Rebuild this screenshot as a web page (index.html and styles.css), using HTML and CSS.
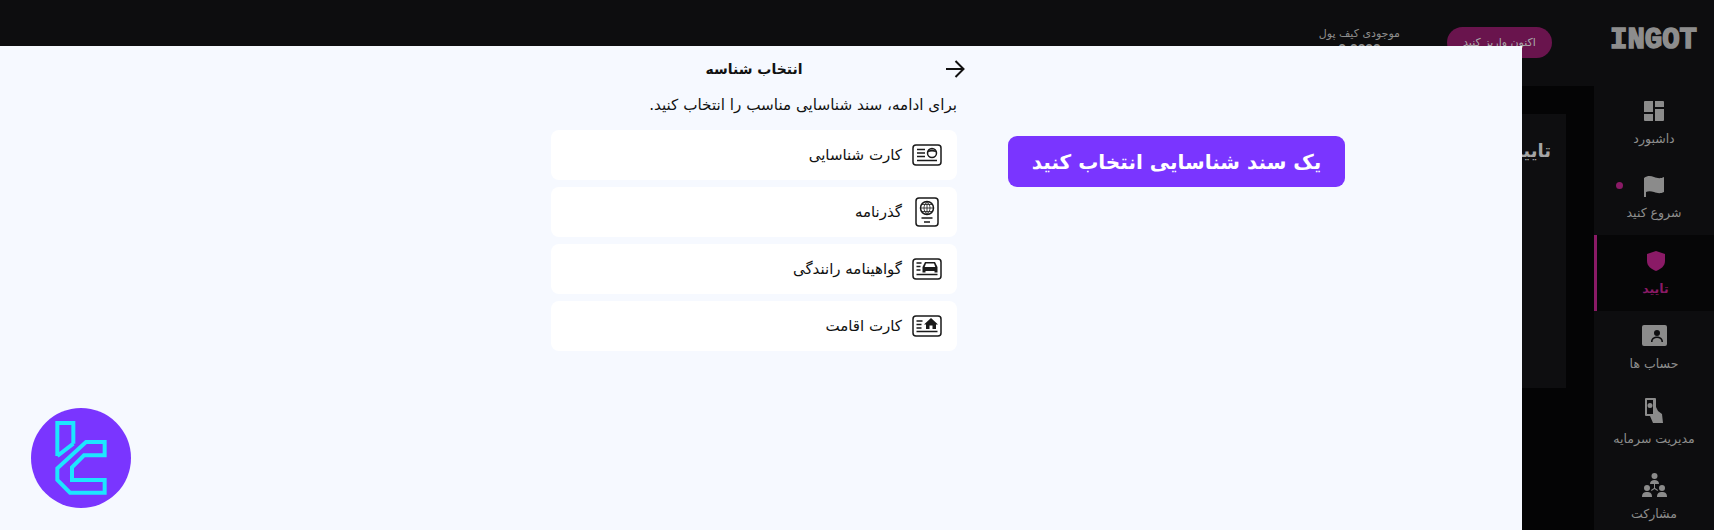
FILE: index.html
```html
<!DOCTYPE html>
<html lang="fa" dir="rtl">

<head>
    <meta charset="UTF-8">
    <meta name="viewport" content="width=device-width, initial-scale=1.0">
    <title>انتخاب شناسه</title>
    <link rel="stylesheet" href="styles.css">
</head>

<body>
    <!-- Dark dashboard behind the panel -->
    <header class="topbar">
        <div class="brand" dir="ltr">INGOT</div>
        <button class="deposit-button">اکنون واریز کنید</button>
        <div class="wallet">
            <span class="wallet-label">موجودی کیف پول</span>
            <span class="wallet-value" dir="ltr">0.0000</span>
        </div>
    </header>

    <div class="shell">
        <nav class="sidebar">
            <a class="nav-item">
                <svg class="nav-icon" viewBox="0 0 20 20"><path d="M0 1a1 1 0 0 1 1-1h8v11H0zM11 0h8a1 1 0 0 1 1 1v5h-9zM0 13h9v7H1a1 1 0 0 1-1-1zM11 8h9v11a1 1 0 0 1-1 1h-8z"/></svg>
                <span>داشبورد</span>
            </a>
            <a class="nav-item">
                <i class="nav-dot"></i>
                <svg class="nav-icon nav-icon-wide" viewBox="0 0 22 22"><path d="M1 3c4-3 7-2 10-1s6 2 10 0v15c-4 2-7 1-10 0s-6-1-8 0v5H1z"/></svg>
                <span>شروع کنید</span>
            </a>
            <a class="nav-item nav-item-active">
                <svg class="nav-icon" viewBox="0 0 20 20"><path d="M10 0l9 3v7c0 5-4 8-9 10-5-2-9-5-9-10V3z"/></svg>
                <span>تایید</span>
            </a>
            <a class="nav-item">
                <svg class="nav-icon nav-icon-account" viewBox="0 0 25 21"><path fill-rule="evenodd" d="M2 0h21a2 2 0 0 1 2 2v17a2 2 0 0 1-2 2H2a2 2 0 0 1-2-2V2a2 2 0 0 1 2-2zm13 5a3 3 0 1 0 0 6 3 3 0 0 0 0-6zm-6 12h1.500c0-3 2-4 4.500-4s4.500 1 4.500 4H21c0-4-3-5.500-6-5.500S9 13 9 17z"/></svg>
                <span>حساب ها</span>
            </a>
            <a class="nav-item">
                <svg class="nav-icon nav-icon-funds" viewBox="0 0 18 25"><path fill-rule="evenodd" d="M1 0h9a1 1 0 0 1 1 1v8l2 4 4 3 1 9H8l-3-7H1a1 1 0 0 1-1-1V1a1 1 0 0 1 1-1zm1 2v14h6V2zm3 3a2.500 2.500 0 1 1 0 5 2.500 2.500 0 0 1 0-5z"/></svg>
                <span>مدیریت سرمایه</span>
            </a>
            <a class="nav-item">
                <svg class="nav-icon nav-icon-share" viewBox="0 0 25 24"><circle cx="12.500" cy="3" r="3"/><path d="M8 11c0-3 2-4 4.500-4s4.500 1 4.500 4z"/><circle cx="5" cy="15" r="3"/><path d="M0 24c0-4 2-5 5-5s5 1 5 5z"/><circle cx="20" cy="15" r="3"/><path d="M15 24c0-4 2-5 5-5s5 1 5 5z"/><path d="M12 11h1v4l3 2-.5 1-3-2-3 2-.5-1 3-2z"/></svg>
                <span>مشارکت</span>
            </a>
        </nav>
        <main class="content">
            <section class="content-card">
                <h2>تایید</h2>
            </section>
        </main>
    </div>

    <!-- Light panel over the dashboard -->
    <section class="panel">
        <div class="hint">یک سند شناسایی انتخاب کنید</div>

        <div class="picker">
            <div class="picker-head">
                <svg class="back-arrow" viewBox="0 0 20 18"><path d="M1 9h17M10.500 1l8 8-8 8"/></svg>
                <h1>انتخاب شناسه</h1>
            </div>
            <p class="picker-text">برای ادامه، سند شناسایی مناسب را انتخاب کنید.</p>

            <div class="doc-list">
                <a class="doc-row">
                    <svg class="doc-icon" viewBox="0 0 30 22">
                        <rect class="line" x="1" y="1" width="28" height="20" rx="3"/>
                        <path class="line" d="M5 5.500h8M5 9h8M5 12.500h8M5 16.500h20"/>
                        <circle class="line" cx="20" cy="9" r="4.500"/>
                        <path class="fill" d="M15.500 8.500c1-4 8-4 9 0-3-1.500-6-1.500-9 0z"/>
                    </svg>
                    <span>کارت شناسایی</span>
                </a>
                <a class="doc-row">
                    <svg class="doc-icon" viewBox="0 0 30 30">
                        <rect class="line" x="4" y="1" width="22" height="28" rx="3"/>
                        <circle class="line" cx="15" cy="11" r="6.500"/>
                        <path class="thin" d="M8.500 11h13M15 4.500v13M9.500 7.500h11M9.500 14.500h11M15 4.500c-4 4-4 9 0 13M15 4.500c4 4 4 9 0 13"/>
                        <path class="line" d="M9.500 21h11M12 25h6"/>
                    </svg>
                    <span>گذرنامه</span>
                </a>
                <a class="doc-row">
                    <svg class="doc-icon" viewBox="0 0 30 22">
                        <rect class="line" x="1" y="1" width="28" height="20" rx="3"/>
                        <path class="line" d="M4.500 5h5M4.500 8.500h4M4.500 12h4M4.500 16.500h21"/>
                        <path class="fill" d="M13 4h10l2.500 5v5.500h-3V13H13.500v1.500h-3V9zm1 1.500L12.700 9h10.600L22 5.500z"/>
                    </svg>
                    <span>گواهینامه رانندگی</span>
                </a>
                <a class="doc-row">
                    <svg class="doc-icon" viewBox="0 0 30 22">
                        <rect class="line" x="1" y="1" width="28" height="20" rx="3"/>
                        <path class="line" d="M4.500 6h6M4.500 9.500h5M4.500 13h5M4.500 16.500h21"/>
                        <path class="fill" d="M19 3l7 6.500h-2V14h-3.500v-3.500h-3V14H14V9.500h-2z"/>
                    </svg>
                    <span>کارت اقامت</span>
                </a>
            </div>
        </div>

        <svg class="site-badge" viewBox="33 24 300 300">
            <circle cx="183" cy="174" r="150"/>
            <path d="M160 131V69H112V168M112 168L160 131"/>
            <path d="M198 126H254V166H192L156 202V240H254V278H150L112 240V205Z"/>
        </svg>
    </section>
</body>

</html>
```

FILE: styles.css
```css
/* General styles */
* {
    box-sizing: border-box;
    margin: 0;
    padding: 0;
}

:root {
    --panel-bg: #f6f9ff;
    --purple: #7a35ff;
    --cyan: #1ce6ff;
    --dark-bar: #0d0d0f;
    --dark-main: #040405;
    --muted: #8d8d8d;
    --magenta: #8a1a66;
}

html, body {
    height: 100%;
}

body {
    position: relative;
    display: flex;
    flex-direction: column;
    overflow: hidden;
    background-color: var(--dark-main);
    color: #111;
    font-family: "DejaVu Sans", sans-serif;
}

/* Top bar */
.topbar {
    flex: none;
    display: flex;
    align-items: flex-start;
    height: 86px;
    padding: 27px 18px 0 0;
    background-color: var(--dark-bar);
}

.brand {
    width: 86px;
    height: 24px;
    margin-top: 2px;
    margin-left: 58px;
    color: var(--muted);
    font-family: "Liberation Mono", monospace;
    font-size: 29px;
    font-weight: 700;
    line-height: 24px;
    -webkit-text-stroke: 1.500px var(--muted);
}

.deposit-button {
    width: 105px;
    height: 31px;
    margin-left: 47px;
    border: none;
    border-radius: 16px;
    background-color: #69144d;
    color: #a9a9a9;
    font-family: inherit;
    font-size: 11px;
}

.wallet {
    display: flex;
    flex-direction: column;
    align-items: center;
    color: var(--muted);
    font-size: 11px;
}

.wallet-value {
    font-weight: 700;
    margin-top: 2px;
}

/* Sidebar and content */
.shell {
    display: flex;
    flex: 1;
    min-height: 0;
}

.sidebar {
    flex: none;
    width: 120px;
    background-color: var(--dark-bar);
}

.nav-item {
    position: relative;
    display: flex;
    flex-direction: column;
    align-items: center;
    justify-content: flex-end;
    height: 75px;
    padding-bottom: 15px;
    color: var(--muted);
    font-size: 12.500px;
}

.nav-item:nth-child(-n+2) {
    height: 74.500px;
}

.nav-item span {
    margin-top: 10px;
}

.nav-icon {
    width: 20px;
    height: 20px;
    fill: #8b8b8b;
}

.nav-icon-wide {
    width: 22px;
    height: 22px;
    margin-bottom: -2px;
}

.nav-icon-account {
    width: 25px;
    height: 21px;
}

.nav-icon-funds {
    width: 18px;
    height: 25px;
    margin-bottom: -2px;
}

.nav-icon-share {
    width: 25px;
    height: 24px;
    margin-bottom: -1px;
}

.nav-item-active {
    height: 76px;
    background-color: #060607;
    border-left: 3px solid var(--magenta);
    color: var(--magenta);
    font-weight: 700;
}

.nav-item-active .nav-icon {
    fill: var(--magenta);
}

.nav-dot {
    position: absolute;
    top: 21px;
    left: 22px;
    width: 7px;
    height: 7px;
    border-radius: 50%;
    background-color: var(--magenta);
}

.content {
    flex: 1;
    padding: 28px 28px 0 0;
}

.content-card {
    height: 274px;
    padding: 26px 15px;
    background-color: #0e0e10;
}

.content-card h2 {
    color: #a5a5a5;
    font-size: 18px;
}

/* Light panel */
.panel {
    position: absolute;
    top: 46px;
    left: 0;
    bottom: 0;
    width: 1522px;
    display: flex;
    align-items: flex-start;
    gap: 51px;
    padding-right: 177px;
    background-color: var(--panel-bg);
}

.hint {
    display: flex;
    align-items: center;
    justify-content: center;
    width: 337px;
    height: 51px;
    margin-top: 90px;
    border-radius: 9px;
    background-color: var(--purple);
    color: white;
    font-size: 20px;
    font-weight: 700;
}

.picker {
    width: 406px;
}

.picker-head {
    display: grid;
    grid-template-columns: 1fr auto 1fr;
    align-items: center;
    height: 46px;
}

.back-arrow {
    width: 20px;
    height: 18px;
    margin-right: -8px;
    fill: none;
    stroke: #111;
    stroke-width: 2;
}

.picker-head h1 {
    font-size: 14px;
}

.picker-text {
    margin-top: 1px;
    height: 37px;
    font-size: 15.200px;
    line-height: 24px;
}

.doc-list {
    display: flex;
    flex-direction: column;
    gap: 7px;
}

.doc-row {
    display: flex;
    align-items: center;
    gap: 10px;
    height: 50px;
    padding-right: 15px;
    border-radius: 8px;
    background-color: white;
    font-size: 15px;
}

.doc-icon {
    flex: none;
    width: 30px;
    height: 30px;
}

.doc-icon .line {
    fill: none;
    stroke: #1a1a1a;
    stroke-width: 1.500;
}

.doc-icon .thin {
    fill: none;
    stroke: #1a1a1a;
    stroke-width: 0.800;
}

.doc-icon .fill {
    fill: #1a1a1a;
    fill-rule: evenodd;
}

/* Round logo in the corner */
.site-badge {
    position: absolute;
    left: 31px;
    top: 362px;
    width: 100px;
    height: 100px;
    fill: none;
    stroke: var(--cyan);
    stroke-width: 12;
}

.site-badge circle {
    fill: var(--purple);
    stroke: none;
}
```
